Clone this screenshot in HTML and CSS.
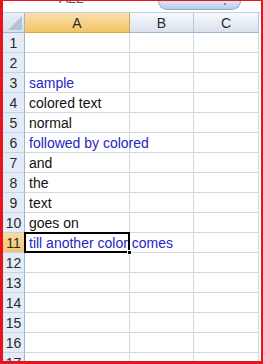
FILE: index.html
```html
<!DOCTYPE html>
<html lang="en">
<head>
    <meta charset="UTF-8">
    <title>Sheet1</title>
    <link rel="stylesheet" href="styles.css">
</head>
<body>
    <div class="frame">
        <div class="formula-strip">
            <span class="name-box">A22</span>
            <span class="tab-shape"><span class="tab-dot"></span></span>
            <span class="strip-dots">..</span>
        </div>

        <div class="sheet">
            <!-- header row -->
            <div class="corner">
                <svg width="21" height="19" viewBox="0 0 21 19">
                    <polygon points="19,3 19,17 5,17" fill="#b4c4d8"/>
                </svg>
            </div>
            <div class="col-head selected">A</div>
            <div class="col-head">B</div>
            <div class="col-head">C</div>

            <div class="row-head">1</div><div class="cell"></div><div class="cell"></div><div class="cell"></div>
            <div class="row-head">2</div><div class="cell"></div><div class="cell"></div><div class="cell"></div>
            <div class="row-head">3</div><div class="cell blue">sample</div><div class="cell"></div><div class="cell"></div>
            <div class="row-head">4</div><div class="cell">colored text</div><div class="cell"></div><div class="cell"></div>
            <div class="row-head">5</div><div class="cell">normal</div><div class="cell"></div><div class="cell"></div>
            <div class="row-head">6</div><div class="cell blue">followed by colored</div><div class="cell"></div><div class="cell"></div>
            <div class="row-head">7</div><div class="cell">and</div><div class="cell"></div><div class="cell"></div>
            <div class="row-head">8</div><div class="cell">the</div><div class="cell"></div><div class="cell"></div>
            <div class="row-head">9</div><div class="cell">text</div><div class="cell"></div><div class="cell"></div>
            <div class="row-head">10</div><div class="cell">goes on</div><div class="cell"></div><div class="cell"></div>
            <div class="row-head selected">11</div><div class="cell blue active">till another color comes</div><div class="cell"></div><div class="cell"></div>
            <div class="row-head">12</div><div class="cell"></div><div class="cell"></div><div class="cell"></div>
            <div class="row-head">13</div><div class="cell"></div><div class="cell"></div><div class="cell"></div>
            <div class="row-head">14</div><div class="cell"></div><div class="cell"></div><div class="cell"></div>
            <div class="row-head">15</div><div class="cell"></div><div class="cell"></div><div class="cell"></div>
            <div class="row-head">16</div><div class="cell"></div><div class="cell"></div><div class="cell"></div>
            <div class="row-head">17</div><div class="cell"></div><div class="cell"></div><div class="cell"></div>
        </div>
    </div>
</body>
</html>
```

FILE: styles.css
```css
body {
    margin: 0;
    padding: 0;
    font-family: "Liberation Sans", Arial, sans-serif;
    background: #fff;
}

.frame {
    width: 263px;
    height: 364px;
    box-sizing: border-box;
    border-top: 1px solid #e8141c;
    border-left: 3px solid #e8141c;
    border-right: 2px solid #e8141c;
    border-bottom: 3px solid #e8141c;
    overflow: hidden;
    background: #fff;
}

/* what is left of the formula bar above the grid */
.formula-strip {
    height: 12px;
    box-sizing: border-box;
    border-bottom: 1px solid #c3cfdf;
    display: flex;
    align-items: flex-start;
    overflow: hidden;
}

.name-box {
    margin: -11px 0 0 56px;
    font-size: 14px;
    line-height: 16px;
    color: #555;
}

.tab-shape {
    margin-left: 74px;
    width: 83px;
    height: 9px;
    box-sizing: border-box;
    border: 1px solid #8ea9c9;
    border-top: none;
    border-radius: 0 0 10px 10px;
    background: linear-gradient(#dbe6f4, #b9cde6);
    display: flex;
    justify-content: flex-end;
}

.tab-dot {
    width: 2px;
    height: 2px;
    margin: 2px 14px 0 0;
    background: #7b8ba0;
}

.strip-dots {
    margin: -10px 0 0 8px;
    font-size: 12px;
    line-height: 12px;
    color: #333;
}

.sheet {
    display: grid;
    grid-template-columns: 22px 105px 64px 65px;
    grid-auto-rows: 20px;
}

.corner {
    box-sizing: border-box;
    background: linear-gradient(#e9eef6, #d7e0ec);
    border-right: 1px solid #9eb6ce;
    border-bottom: 1px solid #9eb6ce;
    line-height: 0;
}

.col-head {
    box-sizing: border-box;
    background: linear-gradient(#f8fafd, #e6ecf4 55%, #d9e1ec);
    border-right: 1px solid #b6c6da;
    border-bottom: 1px solid #9eb6ce;
    text-align: center;
    font-size: 14px;
    line-height: 20px;
    color: #2a2a2a;
}

.col-head.selected {
    background: linear-gradient(#fae0ad, #f7d38a 50%, #f2c466);
    border-right: 1px solid #c9a45d;
    border-bottom: 1px solid #e0a440;
}

.row-head {
    box-sizing: border-box;
    background: #e4ecf7;
    border-right: 1px solid #9eb6ce;
    border-bottom: 1px solid #c5d3e4;
    text-align: center;
    font-size: 14px;
    line-height: 20px;
    color: #2a2a2a;
}

.row-head.selected {
    background: linear-gradient(#fadc9e, #f3c670);
    border-right: 1px solid #e0a440;
}

.cell {
    box-sizing: border-box;
    border-right: 1px solid #d0d7e5;
    border-bottom: 1px solid #d0d7e5;
    padding: 0 0 0 4px;
    font-size: 14px;
    line-height: 21px;
    color: #111;
    white-space: nowrap;
}

.cell.blue {
    color: #2626c4;
}

.cell.active {
    position: relative;
}

.cell.active::after {
    content: "";
    position: absolute;
    left: -1px;
    top: -1px;
    right: -1px;
    bottom: -1px;
    border: 2px solid #000;
}

.cell.active::before {
    content: "";
    position: absolute;
    right: -3px;
    bottom: -3px;
    width: 5px;
    height: 5px;
    background: #000;
    border: 1px solid #fff;
    box-sizing: border-box;
    z-index: 1;
}
```
